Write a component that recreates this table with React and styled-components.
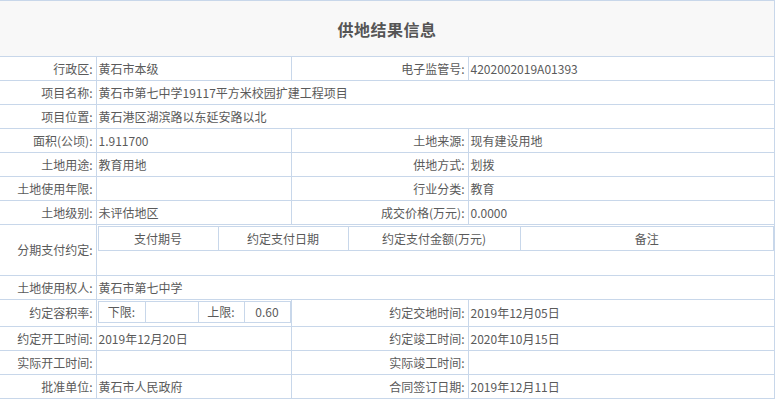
import React from 'react'
import styled, { createGlobalStyle } from 'styled-components'

const GlobalStyle = createGlobalStyle`
  html, body {
    margin: 0;
    padding: 0;
    background: #ffffff;
  }
  body {
    font-family: "Noto Sans CJK SC", "Liberation Sans", sans-serif;
    font-size: 12px;
    color: #5a5a5a;
  }
`

const line = '#c8d7ea'

const rows = [
  ['行政区', '黄石市本级', '电子监管号', '4202002019A01393'],
  ['项目名称', '黄石市第七中学19117平方米校园扩建工程项目'],
  ['项目位置', '黄石港区湖滨路以东延安路以北'],
  ['面积(公顷)', '1.911700', '土地来源', '现有建设用地'],
  ['土地用途', '教育用地', '供地方式', '划拨'],
  ['土地使用年限', '', '行业分类', '教育'],
  ['土地级别', '未评估地区', '成交价格(万元)', '0.0000'],
]

const tailRows = [
  ['约定开工时间', '2019年12月20日', '约定竣工时间', '2020年10月15日'],
  ['实际开工时间', '', '实际竣工时间', ''],
  ['批准单位', '黄石市人民政府', '合同签订日期', '2019年12月11日'],
]

const Row = ({ cells }) => (
  <tr>
    <Label>{cells[0]}:</Label>
    {cells.length === 2 ? (
      <Value colSpan={3}>{cells[1]}</Value>
    ) : (
      <>
        <Value>{cells[1]}</Value>
        <Label>{cells[2]}:</Label>
        <Value>{cells[3]}</Value>
      </>
    )}
  </tr>
)

export default function App() {
  return (
    <>
      <GlobalStyle />
      <Sheet>
        <colgroup>
          <col style={{ width: 96 }} />
          <col style={{ width: 195 }} />
          <col style={{ width: 177 }} />
          <col />
        </colgroup>
        <tbody>
          <tr>
            <Title colSpan={4}>供地结果信息</Title>
          </tr>
          {rows.map((r) => (
            <Row key={r[0]} cells={r} />
          ))}
          <tr>
            <Label>分期支付约定:</Label>
            <NestCell colSpan={3}>
              <PayTable>
                <colgroup>
                  <col style={{ width: 120 }} />
                  <col style={{ width: 130 }} />
                  <col style={{ width: 172 }} />
                  <col />
                </colgroup>
                <tbody>
                  <tr>
                    <Head>支付期号</Head>
                    <Head>约定支付日期</Head>
                    <Head>约定支付金额(万元)</Head>
                    <Head>备注</Head>
                  </tr>
                </tbody>
              </PayTable>
              <EmptyPay />
            </NestCell>
          </tr>
          <Row cells={['土地使用权人', '黄石市第七中学']} />
          <TallRow>
            <Label>约定容积率:</Label>
            <NestCell>
              <RatioTable>
                <tbody>
                  <tr>
                    <Head $w={46}>下限:</Head>
                    <Head $w={52}>&nbsp;</Head>
                    <Head $w={45}>上限:</Head>
                    <Head>0.60</Head>
                  </tr>
                </tbody>
              </RatioTable>
            </NestCell>
            <Label>约定交地时间:</Label>
            <Value>2019年12月05日</Value>
          </TallRow>
          {tailRows.map((r) => (
            <Row key={r[0]} cells={r} />
          ))}
        </tbody>
      </Sheet>
    </>
  )
}

const Sheet = styled.table`
  width: 775px;
  table-layout: fixed;
  border-collapse: collapse;
  border-right: 1px solid ${line};

  td {
    border: 1px solid ${line};
    height: 23px;
    padding: 0;
    line-height: 16px;
    white-space: nowrap;
    overflow: hidden;
  }

  tr > td:first-child {
    border-left: none;
  }
`

const Title = styled.td`
  && {
    height: 55px;
    background: #f8f8f8;
    text-align: center;
    font-size: 16px;
    font-weight: bold;
    color: #555;
    letter-spacing: 0.5px;
  }
`

const Label = styled.td`
  text-align: right;
  padding-right: 3px !important;
`

const Value = styled.td`
  text-align: left;
  padding-left: 2px !important;
`

const NestCell = styled.td`
  vertical-align: top;
  padding: 1px 0 1px 1px !important;
`

const PayTable = styled.table`
  width: 100%;
  table-layout: fixed;
  border-collapse: collapse;
  border: 1px solid ${line};
  border-right: none;
`

const Head = styled.td`
  && {
    text-align: center;
    border: 1px solid ${line};
    width: ${(p) => (p.$w ? `${p.$w}px` : 'auto')};
  }
`

const EmptyPay = styled.div`
  height: 23px;
`

const TallRow = styled.tr`
  & > td {
    height: 24px !important;
  }
`

const RatioTable = styled.table`
  width: 193px;
  border-collapse: collapse;
  border: 1px solid ${line};
  table-layout: fixed;

  td {
    height: 20px !important;
  }
`
